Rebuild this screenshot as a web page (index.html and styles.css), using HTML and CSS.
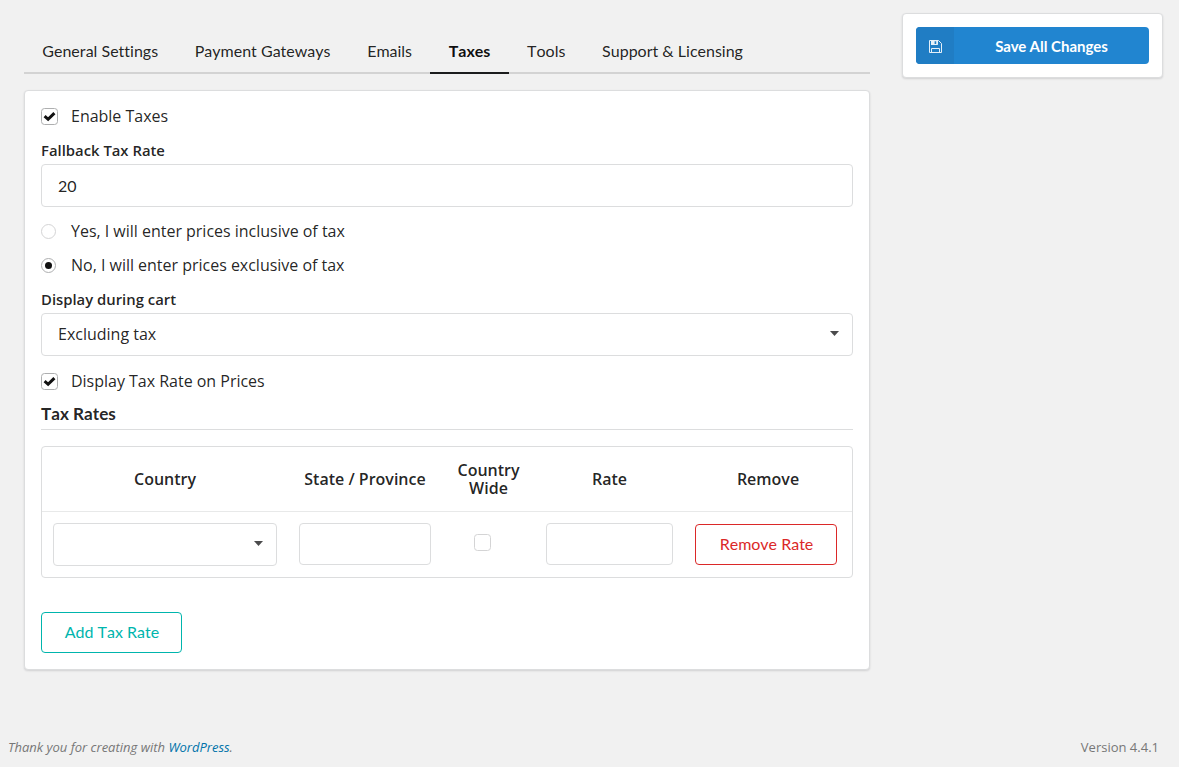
FILE: index.html
```html
<!DOCTYPE html>
<html lang="en">
<head>
<meta charset="utf-8">
<title>Settings – Taxes</title>
<link rel="stylesheet" href="styles.css">
</head>
<body>
<div class="page">
  <div class="columns">
    <main class="main">
      <nav class="tabs">
        <a class="tab">General Settings</a>
        <a class="tab">Payment Gateways</a>
        <a class="tab">Emails</a>
        <a class="tab active">Taxes</a>
        <a class="tab">Tools</a>
        <a class="tab">Support &amp; Licensing</a>
      </nav>
      <section class="segment">
        <div class="choice first">
          <span class="box checked"><svg viewBox="0 0 17 17"><path d="M3.6 8.1 7.1 11.3 13.4 5.1" fill="none" stroke="#111" stroke-width="3"/></svg></span>
          <span>Enable Taxes</span>
        </div>
        <div class="label">Fallback Tax Rate</div>
        <div class="field number">20</div>
        <div class="choice yes"><span class="radio"></span><span>Yes, I will enter prices inclusive of tax</span></div>
        <div class="choice no"><span class="radio checked"></span><span>No, I will enter prices exclusive of tax</span></div>
        <div class="label">Display during cart</div>
        <div class="field select"><span class="value">Excluding tax</span><i class="caret"></i></div>
        <div class="choice display">
          <span class="box checked"><svg viewBox="0 0 17 17"><path d="M3.6 8.1 7.1 11.3 13.4 5.1" fill="none" stroke="#111" stroke-width="3"/></svg></span>
          <span>Display Tax Rate on Prices</span>
        </div>
        <h4 class="heading">Tax Rates</h4>
        <div class="rates">
          <div class="row head">
            <div>Country</div><div>State / Province</div><div>Country Wide</div><div>Rate</div><div>Remove</div>
          </div>
          <div class="row body">
            <div class="field select"><span></span><i class="caret"></i></div>
            <div class="field small"></div>
            <div class="wide"><span class="box"></span></div>
            <div class="field small"></div>
            <button class="button red">Remove Rate</button>
          </div>
        </div>
        <button class="button teal">Add Tax Rate</button>
      </section>
    </main>
    <aside class="side">
      <button class="save">
        <span class="save-icon"><svg viewBox="0 0 13 13" width="13" height="13"><path fill="none" stroke="#e4eff8" stroke-width="1" d="M.5.5h9l3 3v9H.5zM2.5 12.5v-4h8v4M8.5.5v4h-6"/><path fill="#e4eff8" fill-rule="evenodd" d="M2 .5h6.5V5H2zM5.6 1.2v3h1.6v-3z"/></svg></span>
        <span class="save-text">Save All Changes</span>
      </button>
    </aside>
  </div>
  <footer class="footer">
    <span class="thanks">Thank you for creating with <a>WordPress</a>.</span>
    <span>Version 4.4.1</span>
  </footer>
</div>
</body>
</html>
```
FILE: styles.css
```css
* { box-sizing: border-box; }
body { margin: 0; background: #f1f1f1; color: rgba(0,0,0,.87); font: 16px/18px "Open Sans", sans-serif; font-kerning: none; }
button { font-family: Lato, sans-serif; font-kerning: none; margin: 0; cursor: pointer; }
.page { height: 767px; display: flex; flex-direction: column; justify-content: space-between; overflow: hidden; }
.columns { display: flex; align-items: flex-start; padding: 13px 16px 0 24px; gap: 32px; }
.main { width: 846px; padding-top: 16px; }
.tabs { display: flex; height: 45px; border-bottom: 2px solid #d3d3d3; font: 16px/18px Lato, sans-serif; font-kerning: none; font-variant-ligatures: none; }
.tab { height: 45px; padding: 13px 18.4px 0 18.3px; }
.tab.active { font-weight: 700; color: rgba(0,0,0,.95); border-bottom: 2px solid #1b1c1d; }
.segment { margin-top: 16px; height: 580px; padding: 15px 16px 16px; background: #fff; border: 1px solid #dcddde; border-radius: 4px; box-shadow: 0 1px 2px rgba(34,36,38,.15); }
.choice { display: flex; align-items: center; height: 20px; letter-spacing: -.015px; }
.choice.yes { margin-top: 14px; }
.choice.no { margin: 14px 0 16px; }
.choice.first { margin-bottom: 16px; }
.choice.display { margin-top: 15px; }
.box { flex: none; width: 17px; height: 17px; margin-right: 13px; border: 1px solid #d4d4d5; border-radius: 3.5px; background: #fff; }
.box.checked { border-color: #aeafb0; }
.box svg { display: block; width: 17px; height: 17px; margin: -1px; }
.radio { flex: none; display: flex; align-items: center; justify-content: center; width: 15px; height: 15px; margin-right: 15px; border: 1px solid #d4d4d5; border-radius: 50%; }
.radio.checked { border-color: #aeafb0; }
.radio.checked::after { content: ""; width: 7px; height: 7px; border-radius: 50%; background: #111; }
.label { height: 22px; font-size: 14.85px; line-height: 17px; font-weight: 600; }
.field { height: 43px; border: 1px solid #dcddde; border-radius: 4px; background: #fff; padding: 0 16px; display: flex; align-items: center; }
.number { font-family: Lato, sans-serif; }
.value { padding-bottom: 2px; }
.select { justify-content: space-between; padding-right: 13px; }
.caret { width: 9px; height: 5px; background: #4b4b4c; clip-path: polygon(0 0, 100% 0, 50% 100%); margin-bottom: 2px; }
.heading { margin: 14px 0 16px; height: 25px; border-bottom: 1px solid #dcddde; font: 700 17.15px/18px Lato, sans-serif; font-kerning: none; }
.rates { height: 132px; border: 1px solid #dcddde; border-radius: 4px; }
.row { display: grid; grid-template-columns: 246px 154px 93px 149px 168px; align-items: center; }
.head { height: 65px; border-bottom: 1px solid #e8e9e9; font-weight: 600; text-align: center; }
.body { height: 65px; align-items: start; padding-top: 11px; }
.body .field { margin: 0 11px; }
.body .small { height: 42px; }
.wide { display: flex; justify-content: center; padding-top: 11px; }
.wide .box { margin: 0 12px 0 0; }
.button { display: block; height: 41px; padding: 0 0 1px 1px; border: 1px solid; border-radius: 4px; background: #fff; font-size: 16px; line-height: 18px; }
.red { width: 142px; margin: 1px 0 0 11px; color: #db2828; }
.teal { width: 141px; margin-top: 34px; color: #00b5ad; }
.side { width: 261px; height: 65px; padding: 13px; background: #fff; border: 1px solid #dcddde; border-radius: 4px; box-shadow: 0 1px 2px rgba(34,36,38,.15); }
.save { display: flex; width: 233px; height: 37px; padding: 0; border: 0; border-radius: 4px; overflow: hidden; background: #2185d0; color: #fff; font-size: 15px; font-weight: 700; font-kerning: normal; }
.save-icon { width: 38px; height: 37px; padding-top: 2px; background: #207dc4; display: flex; align-items: center; justify-content: center; }
.save-text { flex: 1; line-height: 38px; }
.footer { display: flex; justify-content: space-between; padding: 0 20px 11px 8px; font-size: 13px; color: #777; }
.thanks { font-style: italic; }
.thanks a { color: #0073aa; }
```
